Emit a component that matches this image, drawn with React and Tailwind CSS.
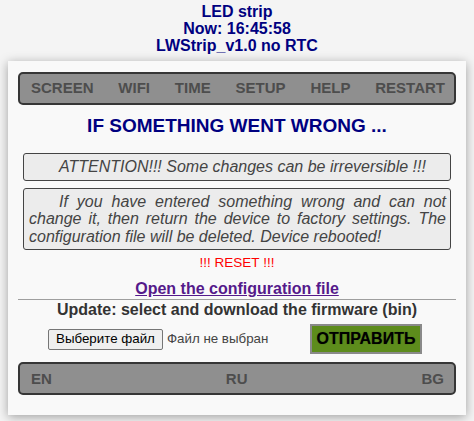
const navItems = ['SCREEN', 'WIFI', 'TIME', 'SETUP', 'HELP', 'RESTART']
const langs = ['EN', 'RU', 'BG']

const Bar = ({ items, className = '' }) => (
  <div
    className={`flex h-[33px] items-center justify-between rounded-[5px] border-2 border-[#363636] bg-[#8f8f8f] text-[15px] font-bold text-[#4d4d4d] ${className}`}
  >
    {items.map((item) => (
      <span key={item}>{item}</span>
    ))}
  </div>
)

const Note = ({ children, className = '' }) => (
  <div
    className={`mx-[5px] rounded-[3px] border border-[#444] bg-[#ececec] py-[4px] pl-[5px] pr-[4px] text-justify indent-[30px] text-[16px] italic leading-[17.6px] text-[#444] ${className}`}
  >
    {children}
  </div>
)

export default function App() {
  return (
    <div className="min-h-[421px] bg-[#f4f4f4] font-['Liberation_Sans',Arial,sans-serif]">
      <div className="pt-[3px] text-center text-[16px] font-bold leading-[17px] text-[#000080]">
        <div>LED strip</div>
        <div>Now: 16:45:58</div>
        <div>LWStrip_v1.0 no RTC</div>
      </div>

      <div className="mx-[8px] mt-[7px] bg-[#f9f9f9] px-[10px] pb-[20px] pt-[11px] shadow-[0_2px_10px_rgba(0,0,0,0.35)]">
        <Bar items={navItems} className="pl-[11px] pr-[9px]" />

        <h3 className="mt-[10px] text-center text-[19px] font-bold leading-[22px] text-[#000080]">
          IF SOMETHING WENT WRONG ...
        </h3>

        <Note className="mt-[16px]">ATTENTION!!! Some changes can be irreversible !!!</Note>
        <Note className="mt-[7px]">
          If you have entered something wrong and can not change it, then return the device to
          factory settings. The configuration file will be deleted. Device rebooted!
        </Note>

        <div className="mt-[5px] text-center text-[13.5px] leading-[16px] text-[#ff0000]">!!! RESET !!!</div>

        <div className="mt-[9px] text-center text-[16px] font-bold leading-[18px]">
          <a href="#" className="text-[#551a8b] underline">
            Open the configuration file
          </a>
        </div>

        <div className="mt-[1px] h-px bg-[#9f9f9f]" />

        <div className="mt-[1px] text-center text-[16px] font-bold leading-[18px] text-[#333]">
          Update: select and download the firmware (bin)
        </div>

        <div className="mt-[5px] flex h-[30px] items-center pl-[30px]">
          <div className="flex w-[258px] items-center text-[13.33px]">
            <span className="flex h-[21px] items-center rounded-[2px] border border-[#767676] bg-[#efefef] px-[7px] text-black">
              Выберите файл
            </span>
            <span className="ml-[4px] text-[#444]">Файл не выбран</span>
          </div>
          <button className="ml-[4px] flex h-[30px] w-[112px] items-center justify-center border-2 border-[#8a8a8a] bg-[#5d8c1c] text-[16px] font-bold text-black [text-shadow:0_0_1px_rgba(0,0,0,0.4)]">
            ОТПРАВИТЬ
          </button>
        </div>

        <Bar items={langs} className="mt-[8px] pl-[11px] pr-[10px]" />
      </div>
    </div>
  )
}
